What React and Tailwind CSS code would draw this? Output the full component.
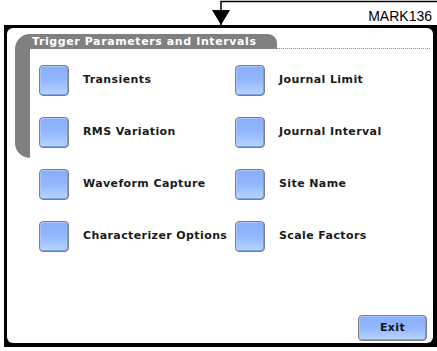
import React from "react";

const options = [
  "Transients",
  "Journal Limit",
  "RMS Variation",
  "Journal Interval",
  "Waveform Capture",
  "Site Name",
  "Characterizer Options",
  "Scale Factors",
];

const keyStyle =
  "rounded-[4px] border border-[#808080] bg-gradient-to-b from-[#89aefa] via-[#92b8ff] to-[#bad6ff] shadow-[inset_-1px_-1px_0_#7a9ee6,inset_1px_1px_0_#a8c5ff]";

const App = () => {
  return (
    <div
      className="w-[437px] h-[351px] bg-white overflow-hidden"
      style={{ fontFamily: "'DejaVu Sans', Verdana, sans-serif" }}
    >
      {/* callout */}
      <div className="relative h-[25px] flex justify-end items-start">
        <svg className="absolute inset-0" width="437" height="25">
          <path d="M221 25 V1.5 H437" fill="none" stroke="#000" strokeWidth="1.5" />
          <polygon points="212,10 230,10 221,25" fill="#000" />
        </svg>
        <span
          className="mt-[9px] mr-[5px] text-[14px] leading-[14px] text-black"
          style={{ fontFamily: "'Liberation Sans', Arial, sans-serif" }}
        >
          MARK136
        </span>
      </div>

      {/* device frame */}
      <div className="ml-[4px] w-[433px] h-[322px] bg-black pt-[3px] pl-[3px] pr-[4px] pb-[4px]">
        <div className="h-full bg-white rounded-[6px] flex flex-col pt-[6px] pl-[8px]">
          <div className="flex items-end h-[15px]">
            <div className="w-[262px] h-[15px] bg-[#808080] rounded-tl-[15px] rounded-tr-[9px] pl-[17px] text-white font-bold text-[11px] leading-[15px] tracking-[0.6px] whitespace-nowrap">
              Trigger Parameters and Intervals
            </div>
            <div className="w-[153px] border-b border-dotted border-[#8a8a8a]" />
          </div>

          <div className="flex">
            <div className="w-[15px] h-[109px] bg-[#808080] rounded-bl-[15px]" />
            <div className="pl-[9px] pt-[16px] grid grid-cols-[196px_180px] gap-y-[21px]">
              {options.map((label) => (
                <div key={label} className="flex items-center h-[31px]">
                  <div className={`w-[30px] h-[31px] shrink-0 ${keyStyle}`} />
                  <span className="ml-[14px] font-bold text-[11px] tracking-[0.4px] text-[#1a1a1a] whitespace-nowrap">
                    {label}
                  </span>
                </div>
              ))}
            </div>
          </div>

          <div className="mt-auto flex justify-end pr-[6px] pb-[2px]">
            <button className={`w-[69px] h-[26px] font-bold text-[11px] tracking-[0.4px] text-[#111] ${keyStyle}`}>
              Exit
            </button>
          </div>
        </div>
      </div>
    </div>
  );
};

export default App;
